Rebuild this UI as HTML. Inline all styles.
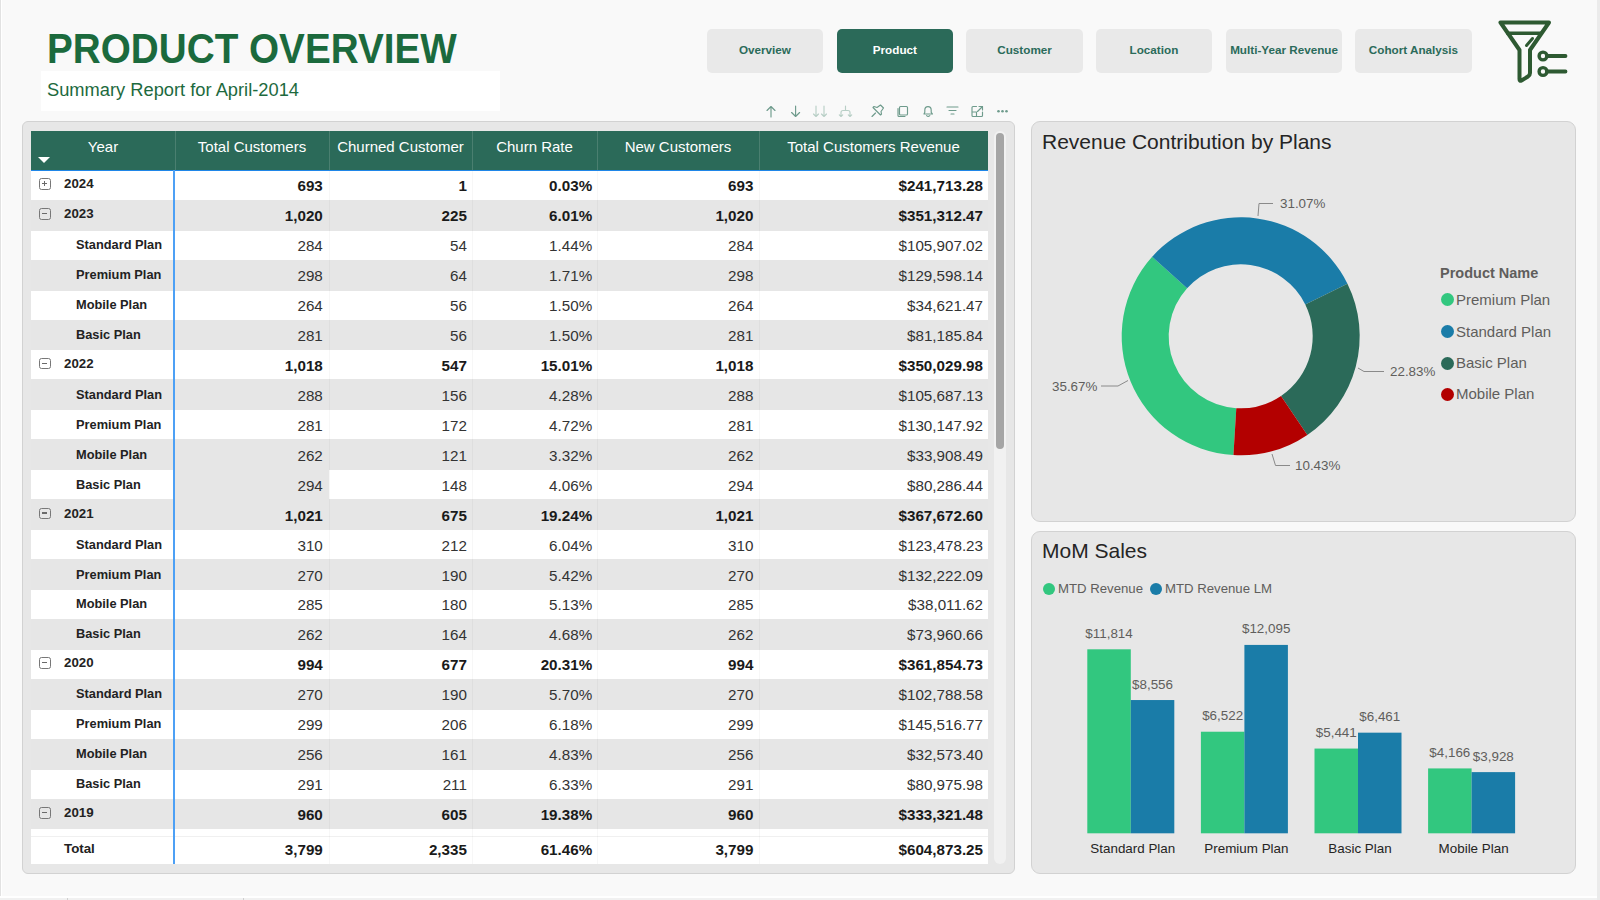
<!DOCTYPE html>
<html><head><meta charset="utf-8"><title>Product Overview</title>
<style>
*{margin:0;padding:0;box-sizing:border-box}
html,body{width:1600px;height:900px;overflow:hidden}
body{position:relative;background:#fafafa;font-family:"Liberation Sans",sans-serif}
.abs{position:absolute}
#bg{position:absolute;left:0;top:0;width:1600px;height:900px}
.title{position:absolute;left:47px;top:25px;font-size:41.7px;font-weight:bold;color:#1b6a3d;white-space:nowrap;line-height:48px;transform:scaleX(0.928);transform-origin:0 0}
.subbox{position:absolute;left:41px;top:71px;width:459px;height:40px;background:#fff}
.subtitle{position:absolute;left:47px;top:78px;font-size:18.3px;color:#1d6a3e;white-space:nowrap;line-height:24px}
.nav{position:absolute;top:28.7px;width:116.5px;height:44.3px;border-radius:5px;background:#e9e9e9;color:#2b6b5a;font-weight:bold;font-size:11.7px;display:flex;align-items:center;justify-content:center;white-space:nowrap;padding-bottom:2px}
.nav.on{background:#2b6a59;color:#fff}
.panel{position:absolute;background:#e7e7e7;border:1.5px solid #d2d2d2;border-radius:8px}
.thead{position:absolute;left:31px;top:131px;width:957px;height:39px;background:#2b6a59}
.th{position:absolute;top:131.5px;height:30px;line-height:30px;text-align:center;color:#fff;font-size:15px;white-space:nowrap}
.thsep{position:absolute;top:131px;width:1px;height:39px;background:#4a7f70}
.sortarrow{position:absolute;left:37.5px;top:157px;width:0;height:0;border-left:6.2px solid transparent;border-right:6.2px solid transparent;border-top:6.3px solid #fff}
.hline{position:absolute;left:31px;top:169.5px;width:957px;height:1.5px;background:#1f86e8}
.row{position:absolute;left:31px;width:957px}
.vline{position:absolute;left:173px;top:170px;width:2px;height:694px;background:#4da0f5}
.tline{position:absolute;left:31px;width:957px;height:1px;background:#f0f0f0}
.exp{position:absolute;left:39px;width:11.5px;height:11.5px;border:1.8px solid #777;border-radius:2.5px}
.exp i{position:absolute;left:1.5px;top:3.8px;width:5.5px;height:1.3px;background:#6a6a6a}
.exp b{position:absolute;left:3.6px;top:1.5px;width:1.3px;height:5.5px;background:#6a6a6a}
.ylab{position:absolute;left:64px;height:30px;line-height:28px;font-size:13.3px;font-weight:bold;color:#222;white-space:nowrap}
.plab{position:absolute;left:76px;height:30px;line-height:30px;font-size:12.8px;font-weight:bold;color:#222;white-space:nowrap}
.val{position:absolute;height:30px;line-height:31px;text-align:right;font-size:15.2px;color:#333;white-space:nowrap}
.val.b{font-weight:bold;color:#1a1a1a;font-size:15.2px}
.scroll{position:absolute;left:994px;top:131px;width:11.5px;height:733px;border-radius:6px;background:#f1f1f1}
.scrollth{position:absolute;left:995.7px;top:132.5px;width:8.3px;height:316.5px;border-radius:4.2px;background:#a5a5a5}
.ptitle{position:absolute;font-size:21px;color:#252525;white-space:nowrap}
.lbl{position:absolute;font-size:13.4px;color:#605e5c;white-space:nowrap;line-height:16px}
.leg{position:absolute;font-size:15px;color:#605e5c;white-space:nowrap;line-height:18px}
.dot{position:absolute;width:12px;height:12px;border-radius:50%}
.cat{position:absolute;font-size:13.4px;color:#252423;white-space:nowrap;text-align:center;line-height:16px}
.hl{position:absolute;background:#e6e6e6;border-bottom:1px solid #d6d6d6}

</style></head><body>
<svg id="bg" width="1600" height="900" viewBox="0 0 1600 900">
  <rect width="1600" height="900" fill="#f9f9f9"/>
  
</svg>
<div class="title">PRODUCT OVERVIEW</div>
<div class="subbox"></div>
<div class="subtitle">Summary Report for April-2014</div>

<div class="nav" style="left:706.7px">Overview</div>
<div class="nav on" style="left:836.6px">Product</div>
<div class="nav" style="left:966.3px">Customer</div>
<div class="nav" style="left:1095.7px">Location</div>
<div class="nav" style="left:1225.8px">Multi-Year Revenue</div>
<div class="nav" style="left:1355.2px">Cohort Analysis</div>

<svg class="abs" style="left:1490px;top:14px" width="84" height="76" viewBox="0 0 84 76">
  <path d="M10.5 8.5 H59 L40 36 V59 Q40 61 38 62.5 L31.5 66.5 Q29.5 67.5 29.5 65 V36 Z" fill="none" stroke="#2e5a32" stroke-width="4" stroke-linejoin="round"/>
<path d="M16.5 19.2 H52.5" stroke="#2e5a32" stroke-width="3.5"/>
<path d="M36.5 31.5 L42.5 24.5" stroke="#2e5a32" stroke-width="3" stroke-linecap="round"/>
<circle cx="53" cy="42" r="3.9" fill="none" stroke="#2e5a32" stroke-width="3.4"/>
<circle cx="53" cy="57.5" r="3.9" fill="none" stroke="#2e5a32" stroke-width="3.4"/>
<path d="M57 42 H75.5 M57 57.5 H75.5" stroke="#2e5a32" stroke-width="3.8" stroke-linecap="round"/>
</svg>

<svg class="abs" style="left:760px;top:100px" width="260" height="22" viewBox="0 0 260 22">
  <g fill="none" stroke="#6e9b8c" stroke-width="1.15" stroke-linecap="round" stroke-linejoin="round">
<path d="M11 17 V6.5 M7 10.5 L11 6.5 L15 10.5"/>
<path d="M35.6 6 V16.5 M31.6 12.5 L35.6 16.5 L39.6 12.5"/>
<path d="M56 6 V16.5 M53.5 14 L56 16.5 L58.5 14 M64 6 V16.5 M61.5 14 L64 16.5 L66.5 14" stroke="#b8cfc6"/>
<path d="M85.5 6 V10.5 M81 16.5 V12.5 Q81 10.5 83 10.5 H88 Q90 10.5 90 12.5 V16.5 M79.3 14.8 L81 16.5 L82.7 14.8 M88.3 14.8 L90 16.5 L91.7 14.8" stroke="#b8cfc6"/>
<path d="M112 16.5 L115.5 13 M117 7.5 L120.5 5 L123.5 8 L121 11.5 L121.5 14 L120.5 15 L113 7.5 L114 6.5 Z"/>
<path d="M140.5 6.5 H146.5 Q147.5 6.5 147.5 7.5 V14 Q147.5 15 146.5 15 H140.5 Q139.5 15 139.5 14 V7.5 Q139.5 6.5 140.5 6.5 Z M138 8.5 V15.5 Q138 16.5 139 16.5 H145"/>
<path d="M164 14 H172.5 L171.2 12.3 V10.2 A3.2 3.6 0 0 0 164.8 10.2 V12.3 Z M166.6 15.6 Q168.2 17 169.8 15.6"/>
<path d="M187 7 H198 M189 10.5 H196 M191 14 H194"/>
<path d="M216.5 6.5 H213 Q212 6.5 212 7.5 V15.5 Q212 16.5 213 16.5 H221.5 Q222.5 16.5 222.5 15.5 V12 M212 12 H216.5 V16.5 M217.5 11.5 L222.5 6.5 M219 6.5 H222.5 V10"/>
</g>
<g fill="#6e9b8c"><circle cx="238.5" cy="11.3" r="1.3"/><circle cx="242.5" cy="11.3" r="1.3"/><circle cx="246.5" cy="11.3" r="1.3"/></g>
</svg>

<div class="panel" style="left:22px;top:121px;width:993px;height:753px;border-radius:6px"></div>
<div class="thead"></div>
<div class="th" style="left:31px;width:144px">Year</div>
<div class="th" style="left:175px;width:154px">Total Customers</div>
<div class="thsep" style="left:175px"></div>
<div class="th" style="left:329px;width:143px">Churned Customer</div>
<div class="thsep" style="left:329px"></div>
<div class="th" style="left:472px;width:125px">Churn Rate</div>
<div class="thsep" style="left:472px"></div>
<div class="th" style="left:597px;width:162px">New Customers</div>
<div class="thsep" style="left:597px"></div>
<div class="th" style="left:759px;width:229px">Total Customers Revenue</div>
<div class="thsep" style="left:759px"></div>
<div class="sortarrow"></div>
<div class="row" style="top:170px;height:694px;background:#fff"></div>
<div class="exp" style="top:178.30px"><i></i><b></b></div>
<div class="ylab" style="top:170.30px">2024</div>
<div class="val b" style="top:170.30px;left:175px;width:147.8px">693</div>
<div class="val b" style="top:170.30px;left:329px;width:137.9px">1</div>
<div class="val b" style="top:170.30px;left:472px;width:120.2px">0.03%</div>
<div class="val b" style="top:170.30px;left:597px;width:156.4px">693</div>
<div class="val b" style="top:170.30px;left:759px;width:224.0px">$241,713.28</div>
<div class="row" style="top:199.74px;height:30.94px;background:#e6e6e6"></div>
<div class="exp" style="top:208.24px"><i></i></div>
<div class="ylab" style="top:200.24px">2023</div>
<div class="val b" style="top:200.24px;left:175px;width:147.8px">1,020</div>
<div class="val b" style="top:200.24px;left:329px;width:137.9px">225</div>
<div class="val b" style="top:200.24px;left:472px;width:120.2px">6.01%</div>
<div class="val b" style="top:200.24px;left:597px;width:156.4px">1,020</div>
<div class="val b" style="top:200.24px;left:759px;width:224.0px">$351,312.47</div>
<div class="plab" style="top:230.18px">Standard Plan</div>
<div class="val" style="top:230.18px;left:175px;width:147.8px">284</div>
<div class="val" style="top:230.18px;left:329px;width:137.9px">54</div>
<div class="val" style="top:230.18px;left:472px;width:120.2px">1.44%</div>
<div class="val" style="top:230.18px;left:597px;width:156.4px">284</div>
<div class="val" style="top:230.18px;left:759px;width:224.0px">$105,907.02</div>
<div class="row" style="top:259.62px;height:30.94px;background:#e6e6e6"></div>
<div class="plab" style="top:260.12px">Premium Plan</div>
<div class="val" style="top:260.12px;left:175px;width:147.8px">298</div>
<div class="val" style="top:260.12px;left:329px;width:137.9px">64</div>
<div class="val" style="top:260.12px;left:472px;width:120.2px">1.71%</div>
<div class="val" style="top:260.12px;left:597px;width:156.4px">298</div>
<div class="val" style="top:260.12px;left:759px;width:224.0px">$129,598.14</div>
<div class="plab" style="top:290.06px">Mobile Plan</div>
<div class="val" style="top:290.06px;left:175px;width:147.8px">264</div>
<div class="val" style="top:290.06px;left:329px;width:137.9px">56</div>
<div class="val" style="top:290.06px;left:472px;width:120.2px">1.50%</div>
<div class="val" style="top:290.06px;left:597px;width:156.4px">264</div>
<div class="val" style="top:290.06px;left:759px;width:224.0px">$34,621.47</div>
<div class="row" style="top:319.50px;height:30.94px;background:#e6e6e6"></div>
<div class="plab" style="top:320.00px">Basic Plan</div>
<div class="val" style="top:320.00px;left:175px;width:147.8px">281</div>
<div class="val" style="top:320.00px;left:329px;width:137.9px">56</div>
<div class="val" style="top:320.00px;left:472px;width:120.2px">1.50%</div>
<div class="val" style="top:320.00px;left:597px;width:156.4px">281</div>
<div class="val" style="top:320.00px;left:759px;width:224.0px">$81,185.84</div>
<div class="exp" style="top:357.94px"><i></i></div>
<div class="ylab" style="top:349.94px">2022</div>
<div class="val b" style="top:349.94px;left:175px;width:147.8px">1,018</div>
<div class="val b" style="top:349.94px;left:329px;width:137.9px">547</div>
<div class="val b" style="top:349.94px;left:472px;width:120.2px">15.01%</div>
<div class="val b" style="top:349.94px;left:597px;width:156.4px">1,018</div>
<div class="val b" style="top:349.94px;left:759px;width:224.0px">$350,029.98</div>
<div class="row" style="top:379.38px;height:30.94px;background:#e6e6e6"></div>
<div class="plab" style="top:379.88px">Standard Plan</div>
<div class="val" style="top:379.88px;left:175px;width:147.8px">288</div>
<div class="val" style="top:379.88px;left:329px;width:137.9px">156</div>
<div class="val" style="top:379.88px;left:472px;width:120.2px">4.28%</div>
<div class="val" style="top:379.88px;left:597px;width:156.4px">288</div>
<div class="val" style="top:379.88px;left:759px;width:224.0px">$105,687.13</div>
<div class="plab" style="top:409.82px">Premium Plan</div>
<div class="val" style="top:409.82px;left:175px;width:147.8px">281</div>
<div class="val" style="top:409.82px;left:329px;width:137.9px">172</div>
<div class="val" style="top:409.82px;left:472px;width:120.2px">4.72%</div>
<div class="val" style="top:409.82px;left:597px;width:156.4px">281</div>
<div class="val" style="top:409.82px;left:759px;width:224.0px">$130,147.92</div>
<div class="row" style="top:439.26px;height:30.94px;background:#e6e6e6"></div>
<div class="plab" style="top:439.76px">Mobile Plan</div>
<div class="val" style="top:439.76px;left:175px;width:147.8px">262</div>
<div class="val" style="top:439.76px;left:329px;width:137.9px">121</div>
<div class="val" style="top:439.76px;left:472px;width:120.2px">3.32%</div>
<div class="val" style="top:439.76px;left:597px;width:156.4px">262</div>
<div class="val" style="top:439.76px;left:759px;width:224.0px">$33,908.49</div>
<div class="plab" style="top:469.70px">Basic Plan</div>
<div class="hl" style="top:469.70px;left:175px;width:154px;height:29.94px"></div>
<div class="val" style="top:469.70px;left:175px;width:147.8px">294</div>
<div class="val" style="top:469.70px;left:329px;width:137.9px">148</div>
<div class="val" style="top:469.70px;left:472px;width:120.2px">4.06%</div>
<div class="val" style="top:469.70px;left:597px;width:156.4px">294</div>
<div class="val" style="top:469.70px;left:759px;width:224.0px">$80,286.44</div>
<div class="row" style="top:499.14px;height:30.94px;background:#e6e6e6"></div>
<div class="exp" style="top:507.64px"><i></i></div>
<div class="ylab" style="top:499.64px">2021</div>
<div class="val b" style="top:499.64px;left:175px;width:147.8px">1,021</div>
<div class="val b" style="top:499.64px;left:329px;width:137.9px">675</div>
<div class="val b" style="top:499.64px;left:472px;width:120.2px">19.24%</div>
<div class="val b" style="top:499.64px;left:597px;width:156.4px">1,021</div>
<div class="val b" style="top:499.64px;left:759px;width:224.0px">$367,672.60</div>
<div class="plab" style="top:529.58px">Standard Plan</div>
<div class="val" style="top:529.58px;left:175px;width:147.8px">310</div>
<div class="val" style="top:529.58px;left:329px;width:137.9px">212</div>
<div class="val" style="top:529.58px;left:472px;width:120.2px">6.04%</div>
<div class="val" style="top:529.58px;left:597px;width:156.4px">310</div>
<div class="val" style="top:529.58px;left:759px;width:224.0px">$123,478.23</div>
<div class="row" style="top:559.02px;height:30.94px;background:#e6e6e6"></div>
<div class="plab" style="top:559.52px">Premium Plan</div>
<div class="val" style="top:559.52px;left:175px;width:147.8px">270</div>
<div class="val" style="top:559.52px;left:329px;width:137.9px">190</div>
<div class="val" style="top:559.52px;left:472px;width:120.2px">5.42%</div>
<div class="val" style="top:559.52px;left:597px;width:156.4px">270</div>
<div class="val" style="top:559.52px;left:759px;width:224.0px">$132,222.09</div>
<div class="plab" style="top:589.46px">Mobile Plan</div>
<div class="val" style="top:589.46px;left:175px;width:147.8px">285</div>
<div class="val" style="top:589.46px;left:329px;width:137.9px">180</div>
<div class="val" style="top:589.46px;left:472px;width:120.2px">5.13%</div>
<div class="val" style="top:589.46px;left:597px;width:156.4px">285</div>
<div class="val" style="top:589.46px;left:759px;width:224.0px">$38,011.62</div>
<div class="row" style="top:618.90px;height:30.94px;background:#e6e6e6"></div>
<div class="plab" style="top:619.40px">Basic Plan</div>
<div class="val" style="top:619.40px;left:175px;width:147.8px">262</div>
<div class="val" style="top:619.40px;left:329px;width:137.9px">164</div>
<div class="val" style="top:619.40px;left:472px;width:120.2px">4.68%</div>
<div class="val" style="top:619.40px;left:597px;width:156.4px">262</div>
<div class="val" style="top:619.40px;left:759px;width:224.0px">$73,960.66</div>
<div class="exp" style="top:657.34px"><i></i></div>
<div class="ylab" style="top:649.34px">2020</div>
<div class="val b" style="top:649.34px;left:175px;width:147.8px">994</div>
<div class="val b" style="top:649.34px;left:329px;width:137.9px">677</div>
<div class="val b" style="top:649.34px;left:472px;width:120.2px">20.31%</div>
<div class="val b" style="top:649.34px;left:597px;width:156.4px">994</div>
<div class="val b" style="top:649.34px;left:759px;width:224.0px">$361,854.73</div>
<div class="row" style="top:678.78px;height:30.94px;background:#e6e6e6"></div>
<div class="plab" style="top:679.28px">Standard Plan</div>
<div class="val" style="top:679.28px;left:175px;width:147.8px">270</div>
<div class="val" style="top:679.28px;left:329px;width:137.9px">190</div>
<div class="val" style="top:679.28px;left:472px;width:120.2px">5.70%</div>
<div class="val" style="top:679.28px;left:597px;width:156.4px">270</div>
<div class="val" style="top:679.28px;left:759px;width:224.0px">$102,788.58</div>
<div class="plab" style="top:709.22px">Premium Plan</div>
<div class="val" style="top:709.22px;left:175px;width:147.8px">299</div>
<div class="val" style="top:709.22px;left:329px;width:137.9px">206</div>
<div class="val" style="top:709.22px;left:472px;width:120.2px">6.18%</div>
<div class="val" style="top:709.22px;left:597px;width:156.4px">299</div>
<div class="val" style="top:709.22px;left:759px;width:224.0px">$145,516.77</div>
<div class="row" style="top:738.66px;height:30.94px;background:#e6e6e6"></div>
<div class="plab" style="top:739.16px">Mobile Plan</div>
<div class="val" style="top:739.16px;left:175px;width:147.8px">256</div>
<div class="val" style="top:739.16px;left:329px;width:137.9px">161</div>
<div class="val" style="top:739.16px;left:472px;width:120.2px">4.83%</div>
<div class="val" style="top:739.16px;left:597px;width:156.4px">256</div>
<div class="val" style="top:739.16px;left:759px;width:224.0px">$32,573.40</div>
<div class="plab" style="top:769.10px">Basic Plan</div>
<div class="val" style="top:769.10px;left:175px;width:147.8px">291</div>
<div class="val" style="top:769.10px;left:329px;width:137.9px">211</div>
<div class="val" style="top:769.10px;left:472px;width:120.2px">6.33%</div>
<div class="val" style="top:769.10px;left:597px;width:156.4px">291</div>
<div class="val" style="top:769.10px;left:759px;width:224.0px">$80,975.98</div>
<div class="row" style="top:798.54px;height:30.94px;background:#e6e6e6"></div>
<div class="exp" style="top:807.04px"><i></i></div>
<div class="ylab" style="top:799.04px">2019</div>
<div class="val b" style="top:799.04px;left:175px;width:147.8px">960</div>
<div class="val b" style="top:799.04px;left:329px;width:137.9px">605</div>
<div class="val b" style="top:799.04px;left:472px;width:120.2px">19.38%</div>
<div class="val b" style="top:799.04px;left:597px;width:156.4px">960</div>
<div class="val b" style="top:799.04px;left:759px;width:224.0px">$333,321.48</div>
<div class="row" style="top:828.98px;height:35.02px;background:#fff"></div>
<div class="tline" style="top:836px"></div>
<div class="ylab" style="top:834.98px;left:64px">Total</div>
<div class="val b" style="top:833.98px;left:175px;width:147.8px">3,799</div>
<div class="val b" style="top:833.98px;left:329px;width:137.9px">2,335</div>
<div class="val b" style="top:833.98px;left:472px;width:120.2px">61.46%</div>
<div class="val b" style="top:833.98px;left:597px;width:156.4px">3,799</div>
<div class="val b" style="top:833.98px;left:759px;width:224.0px">$604,873.25</div>
<div class="abs" style="left:329px;top:171px;width:1px;height:693px;background:rgba(0,0,0,0.03)"></div>
<div class="abs" style="left:472px;top:171px;width:1px;height:693px;background:rgba(0,0,0,0.03)"></div>
<div class="abs" style="left:597px;top:171px;width:1px;height:693px;background:rgba(0,0,0,0.03)"></div>
<div class="abs" style="left:759px;top:171px;width:1px;height:693px;background:rgba(0,0,0,0.03)"></div>
<div class="hline"></div>
<div class="vline"></div>
<div class="scroll"></div>
<div class="scrollth"></div>

<div class="panel" style="left:1031px;top:121px;width:545px;height:401px;border-radius:9px"></div>
<div class="ptitle" style="left:1042px;top:130px">Revenue Contribution by Plans</div>
<svg class="abs" style="left:1031px;top:121px" width="545" height="401" viewBox="1031 121 545 401">
  <path d="M1233.44 455.08 A119 119 0 0 1 1152.14 256.81 L1187.12 288.20 A72 72 0 0 0 1236.30 408.17Z" fill="#32c77f"/>
<path d="M1152.14 256.81 A119 119 0 0 1 1347.44 283.69 L1305.28 304.47 A72 72 0 0 0 1187.12 288.20Z" fill="#1a7ca8"/>
<path d="M1347.44 283.69 A119 119 0 0 1 1307.33 434.90 L1281.01 395.96 A72 72 0 0 0 1305.28 304.47Z" fill="#2b6a59"/>
<path d="M1307.33 434.90 A119 119 0 0 1 1233.44 455.08 L1236.30 408.17 A72 72 0 0 0 1281.01 395.96Z" fill="#b30000"/>
<polyline points="1258,216 1259,203.5 1273,203.5" fill="none" stroke="#8a8a8a" stroke-width="1"/>
<polyline points="1358,368 1364,371.5 1384,371.5" fill="none" stroke="#8a8a8a" stroke-width="1"/>
<polyline points="1272,454 1275.5,465.5 1290,465.5" fill="none" stroke="#8a8a8a" stroke-width="1"/>
<polyline points="1128,380.5 1118,386 1101,386" fill="none" stroke="#8a8a8a" stroke-width="1"/>
</svg>
<div class="lbl" style="left:1280px;top:196px">31.07%</div>
<div class="lbl" style="left:1390px;top:364px">22.83%</div>
<div class="lbl" style="left:1295px;top:458px">10.43%</div>
<div class="lbl" style="left:1052px;top:379px">35.67%</div>
<div class="leg" style="left:1440px;top:264px;font-weight:bold;font-size:14.5px">Product Name</div>
<div class="dot" style="left:1440.5px;top:293.0px;width:13px;height:13px;background:#32c77f"></div>
<div class="leg" style="left:1456px;top:290.5px">Premium Plan</div>
<div class="dot" style="left:1440.5px;top:325.1px;width:13px;height:13px;background:#1a7ca8"></div>
<div class="leg" style="left:1456px;top:322.6px">Standard Plan</div>
<div class="dot" style="left:1440.5px;top:356.5px;width:13px;height:13px;background:#2b6a59"></div>
<div class="leg" style="left:1456px;top:354.0px">Basic Plan</div>
<div class="dot" style="left:1440.5px;top:387.7px;width:13px;height:13px;background:#b30000"></div>
<div class="leg" style="left:1456px;top:385.2px">Mobile Plan</div>

<div class="panel" style="left:1031px;top:531px;width:545px;height:343px;border-radius:9px"></div>
<div class="ptitle" style="left:1042px;top:539px">MoM Sales</div>
<div class="dot" style="left:1043px;top:583px;background:#32c77f"></div>
<div class="leg" style="left:1058px;top:580px;font-size:13.2px">MTD Revenue</div>
<div class="dot" style="left:1150px;top:583px;background:#1a7ca8"></div>
<div class="leg" style="left:1165px;top:580px;font-size:13.2px">MTD Revenue LM</div>
<svg class="abs" style="left:1031px;top:531px" width="545" height="342" viewBox="1031 531 545 342">
  <rect x="1087.30" y="649.30" width="43.5" height="184.00" fill="#32c77f"/>
<rect x="1130.80" y="700.04" width="43.5" height="133.26" fill="#1a7ca8"/>
<rect x="1200.90" y="731.72" width="43.5" height="101.58" fill="#32c77f"/>
<rect x="1244.40" y="644.92" width="43.5" height="188.38" fill="#1a7ca8"/>
<rect x="1314.50" y="748.56" width="43.5" height="84.74" fill="#32c77f"/>
<rect x="1358.00" y="732.67" width="43.5" height="100.63" fill="#1a7ca8"/>
<rect x="1428.10" y="768.42" width="43.5" height="64.88" fill="#32c77f"/>
<rect x="1471.60" y="772.12" width="43.5" height="61.18" fill="#1a7ca8"/>
</svg>
<div class="lbl" style="left:1057.3px;width:103.5px;text-align:center;top:625.8px">$11,814</div>
<div class="lbl" style="left:1100.8px;width:103.5px;text-align:center;top:676.5px">$8,556</div>
<div class="cat" style="left:1069.3px;width:127.0px;top:841px">Standard Plan</div>
<div class="lbl" style="left:1170.9px;width:103.5px;text-align:center;top:708.2px">$6,522</div>
<div class="lbl" style="left:1214.4px;width:103.5px;text-align:center;top:621.4px">$12,095</div>
<div class="cat" style="left:1182.9px;width:127.0px;top:841px">Premium Plan</div>
<div class="lbl" style="left:1284.5px;width:103.5px;text-align:center;top:725.1px">$5,441</div>
<div class="lbl" style="left:1328.0px;width:103.5px;text-align:center;top:709.2px">$6,461</div>
<div class="cat" style="left:1296.5px;width:127.0px;top:841px">Basic Plan</div>
<div class="lbl" style="left:1398.1px;width:103.5px;text-align:center;top:744.9px">$4,166</div>
<div class="lbl" style="left:1441.6px;width:103.5px;text-align:center;top:748.6px">$3,928</div>
<div class="cat" style="left:1410.1px;width:127.0px;top:841px">Mobile Plan</div>

<div class="abs" style="left:0;top:0;width:1px;height:900px;background:#e2e2e2"></div>
<div class="abs" style="left:1px;top:0;width:1px;height:900px;background:#ffffff"></div>
<div class="abs" style="left:1597px;top:0;width:3px;height:900px;background:#ebebeb"></div>
<div class="abs" style="left:0;top:896px;width:1597px;height:2px;background:#ffffff"></div>
<div class="abs" style="left:0;top:898px;width:1597px;height:2px;background:#f1f1f1"></div>
<div class="abs" style="left:67px;top:898px;width:1px;height:2px;background:#cfcfcf"></div>
<div class="abs" style="left:243px;top:898px;width:1px;height:2px;background:#cfcfcf"></div>

</body></html>
